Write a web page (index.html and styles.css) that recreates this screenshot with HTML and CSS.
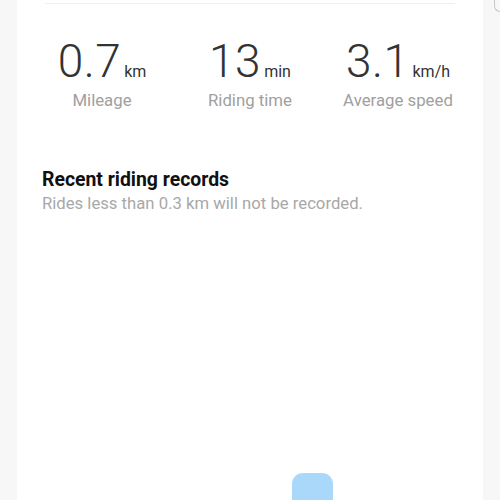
FILE: index.html
```html
<!DOCTYPE html>
<html>
<head>
<meta charset="utf-8">
<link rel="stylesheet" href="styles.css">
</head>
<body>
<div class="page">
  <main class="card">
    <div class="top-edge"></div>
    <section class="stats">
      <div class="stat">
        <div class="value"><span class="num">0.7</span><span class="unit">km</span></div>
        <div class="label">Mileage</div>
      </div>
      <div class="stat">
        <div class="value"><span class="num">13</span><span class="unit">min</span></div>
        <div class="label">Riding time</div>
      </div>
      <div class="stat">
        <div class="value"><span class="num">3.1</span><span class="unit">km/h</span></div>
        <div class="label">Average speed</div>
      </div>
    </section>
    <section class="records">
      <h2 class="records-title">Recent riding records</h2>
      <p class="records-note">Rides less than 0.3 km will not be recorded.</p>
    </section>
    <div class="spacer"></div>
    <div class="fab-row"><div class="fab"></div></div>
  </main>
  <div class="side"><div class="side-corner"></div></div>
</div>
</body>
</html>
```
FILE: styles.css
```css
html, body {
  margin: 0;
  padding: 0;
  background: #f7f7f7;
  font-family: Roboto, "Liberation Sans", sans-serif;
}
.page {
  display: flex;
  height: 500px;
  overflow: hidden;
  padding-left: 17px;
}
.card {
  width: 466px;
  height: 500px;
  background: #ffffff;
  display: flex;
  flex-direction: column;
}
.top-edge {
  height: 3px;
  margin: 0 28px;
  border-bottom: 1px solid #f0f0f0;
}
.stats {
  display: grid;
  grid-template-columns: repeat(3, 148px);
  padding: 33px 11px 0;
}
.stat {
  display: flex;
  flex-direction: column;
  align-items: center;
}
.value {
  display: flex;
  align-items: baseline;
  color: #333333;
  line-height: 48px;
}
.num {
  font-size: 46px;
  font-weight: 300;
  letter-spacing: 0.5px;
}
.unit {
  font-size: 16px;
  margin-left: 3px;
}
.label {
  font-size: 16.8px;
  line-height: 22px;
  color: #a0a0a0;
  margin-top: -7px;
}
.records {
  padding: 58px 25px 0;
}
.records-title {
  margin: 0;
  font-size: 19.4px;
  line-height: 22px;
  font-weight: 700;
  color: #111111;
}
.records-note {
  margin: 2px 0 0;
  font-size: 16.7px;
  line-height: 22px;
  color: #a8a8a8;
}
.spacer { flex: 1; }
.fab-row {
  display: flex;
  padding-left: 275px;
  height: 27px;
}
.fab {
  width: 41px;
  height: 40px;
  border-radius: 11px;
  background: #aad8fb;
}
.side {
  flex: 1;
  position: relative;
}
.side-corner {
  margin-left: 11px;
  width: 20px;
  height: 11px;
  border-left: 1.5px solid #c8c8c8;
  border-bottom: 1.5px solid #c8c8c8;
  border-bottom-left-radius: 6px;
}
```
